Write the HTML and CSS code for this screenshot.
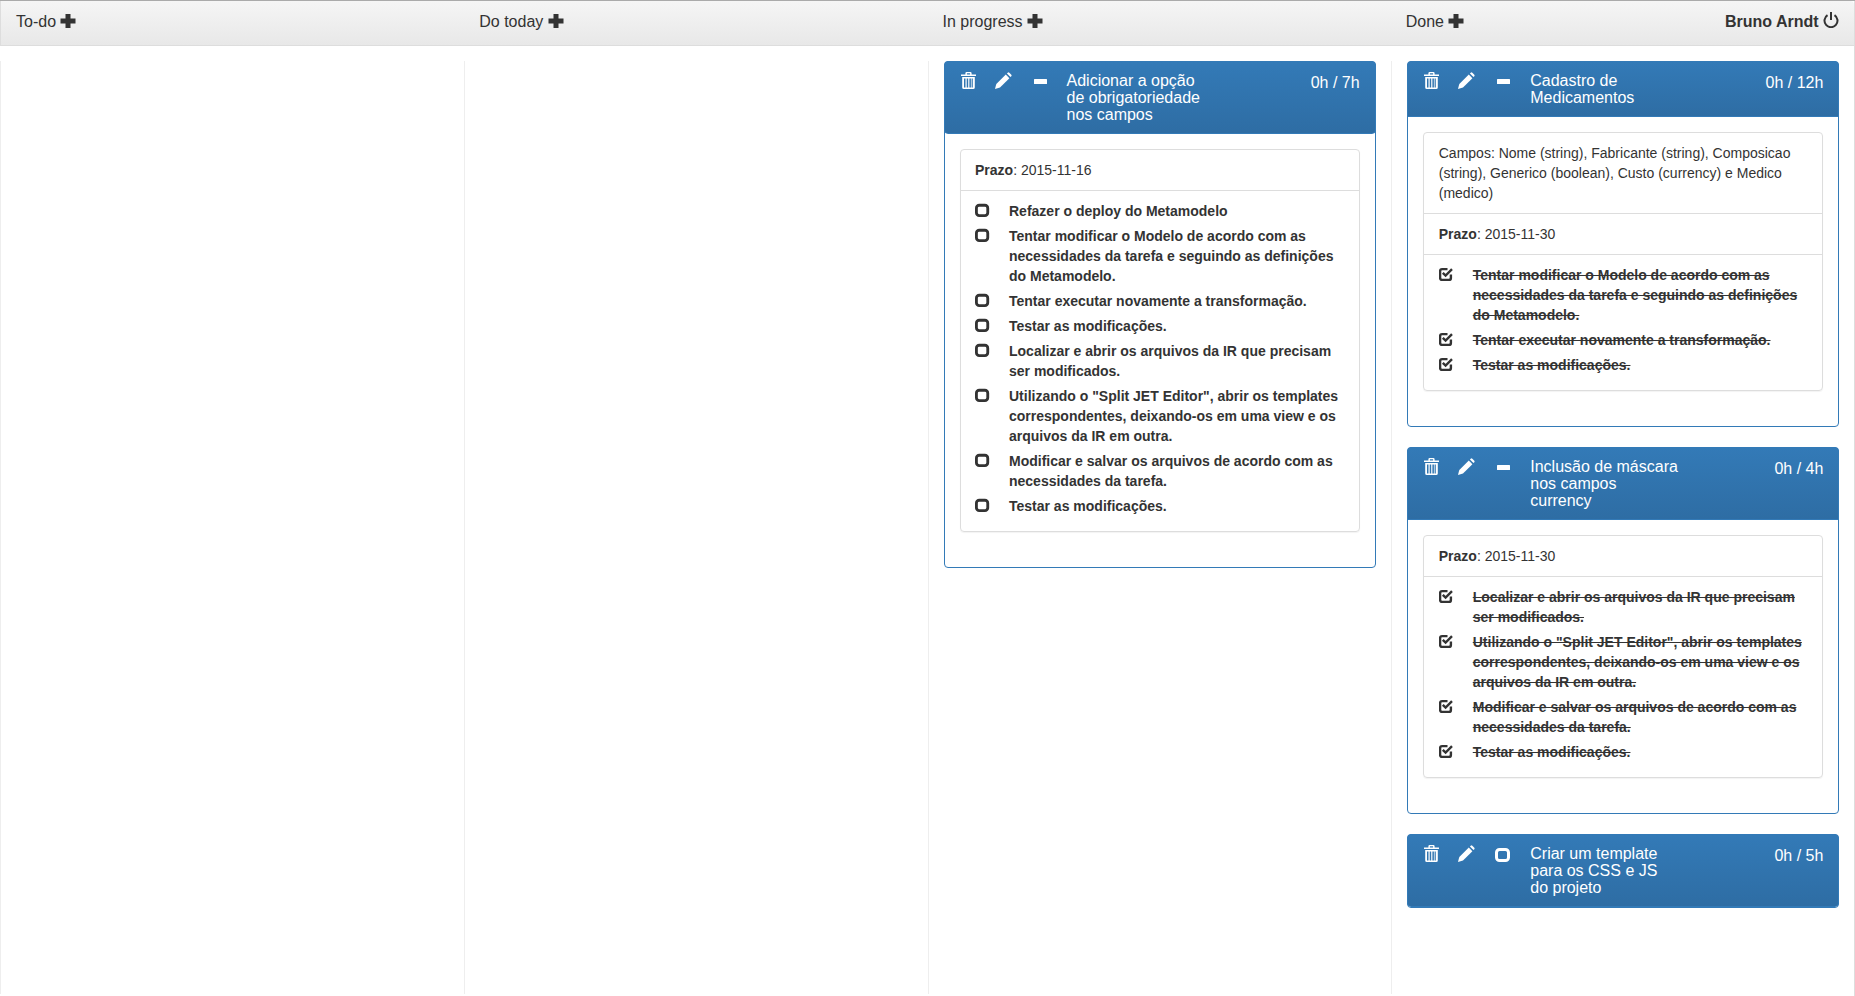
FILE: index.html
```html
<!DOCTYPE html>
<html lang="en">

<head>
    <meta charset="UTF-8">
    <title>Quadro de tarefas</title>
    <link rel="stylesheet" href="styles.css">
</head>

<body>
    <svg class="sprites" xmlns="http://www.w3.org/2000/svg">
        <symbol id="i-trash" viewBox="0 0 18 18">
            <path fill-rule="evenodd" d="M1 2.4h4.4V1.2Q5.4 0 6.6 0h3.800q1.200 0 1.200 1.200v1.200H16V4H1zM6.900 2.400h3.200V1.300H6.900z" />
            <path fill-rule="evenodd" d="M2.200 5h12.600v10.400q0 1.600-1.600 1.600H3.800q-1.600 0-1.600-1.600zM4 6.400v9h1.500v-9zm2.700 0v9h1.500v-9zm2.700 0v9h1.500v-9zm2.200 0v9h1.200v-9z" />
        </symbol>
        <symbol id="i-pencil" viewBox="0 0 18 18">
            <path d="M1 17l1.300-5L11.800 2.600l3.600 3.600L6 15.600z" />
            <path d="M12.900 1.500l.8-.8q.8-.7 1.600 0l2 2q.7.8 0 1.600l-.8.8z" />
        </symbol>
        <symbol id="i-minus" viewBox="0 0 18 18">
            <rect x="2" y="7" width="13" height="5" rx="0.5" />
        </symbol>
        <symbol id="i-box" viewBox="0 0 18 18">
            <rect x="1.500" y="4.500" width="12" height="11" rx="3" fill="none" stroke="currentColor" stroke-width="3" />
        </symbol>
        <symbol id="i-check" viewBox="0 0 16 16">
            <path fill="none" stroke="currentColor" stroke-width="2.400" d="M11.900 8.500v3.400q0 2-2 2H3.100q-2 0-2-2V5.100q0-2 2-2H8.500" />
            <path fill="none" stroke="currentColor" stroke-width="2.400" d="M3.800 6.800l2.800 2.800 6.400-6.400" />
        </symbol>
        <symbol id="i-plus" viewBox="0 0 16 16">
            <path d="M5.500 1h5v4.500H15.500v5h-5V15h-5v-4.500H.5v-5h5z" />
        </symbol>
        <symbol id="i-power" viewBox="0 0 16 16">
            <path fill="none" stroke="currentColor" stroke-width="2" d="M4.500 3.200a6.500 6.500 0 1 0 7 0" />
            <rect x="7" y="0" width="2" height="8" />
        </symbol>
    </svg>

    <header class="topbar">
        <div class="topbar-cell">To-do <svg class="plus"><use href="#i-plus" /></svg></div>
        <div class="topbar-cell">Do today <svg class="plus"><use href="#i-plus" /></svg></div>
        <div class="topbar-cell">In progress <svg class="plus"><use href="#i-plus" /></svg></div>
        <div class="topbar-cell topbar-last">
            <span>Done <svg class="plus"><use href="#i-plus" /></svg></span>
            <span class="user">Bruno Arndt <svg class="power"><use href="#i-power" /></svg></span>
        </div>
    </header>

    <main class="board">
        <section class="column"></section>
        <section class="column"></section>

        <section class="column">
            <article class="task">
                <div class="task-head">
                    <div class="task-icons">
                        <svg><use href="#i-trash" /></svg>
                        <svg><use href="#i-pencil" /></svg>
                        <svg><use href="#i-minus" /></svg>
                    </div>
                    <h3 class="task-title">Adicionar a opção<br>de obrigatoriedade<br>nos campos</h3>
                    <div class="task-hours">0h / 7h</div>
                </div>
                <div class="task-body">
                    <div class="card">
                        <div class="card-row"><b>Prazo</b>: 2015-11-16</div>
                        <ul class="steps">
                            <li><svg class="mark"><use href="#i-box" /></svg>Refazer o deploy do Metamodelo</li>
                            <li><svg class="mark"><use href="#i-box" /></svg>Tentar modificar o Modelo de acordo com as necessidades da tarefa e seguindo as definições do Metamodelo.</li>
                            <li><svg class="mark"><use href="#i-box" /></svg>Tentar executar novamente a transformação.</li>
                            <li><svg class="mark"><use href="#i-box" /></svg>Testar as modificações.</li>
                            <li><svg class="mark"><use href="#i-box" /></svg>Localizar e abrir os arquivos da IR que precisam ser modificados.</li>
                            <li><svg class="mark"><use href="#i-box" /></svg>Utilizando o "Split JET Editor", abrir os templates correspondentes, deixando-os em uma view e os arquivos da IR em outra.</li>
                            <li><svg class="mark"><use href="#i-box" /></svg>Modificar e salvar os arquivos de acordo com as necessidades da tarefa.</li>
                            <li><svg class="mark"><use href="#i-box" /></svg>Testar as modificações.</li>
                        </ul>
                    </div>
                </div>
            </article>
        </section>

        <section class="column">
            <article class="task">
                <div class="task-head">
                    <div class="task-icons">
                        <svg><use href="#i-trash" /></svg>
                        <svg><use href="#i-pencil" /></svg>
                        <svg><use href="#i-minus" /></svg>
                    </div>
                    <h3 class="task-title">Cadastro de<br>Medicamentos</h3>
                    <div class="task-hours">0h / 12h</div>
                </div>
                <div class="task-body">
                    <div class="card">
                        <div class="card-row">Campos: Nome (string), Fabricante (string), Composicao (string), Generico (boolean), Custo (currency) e Medico (medico)</div>
                        <div class="card-row"><b>Prazo</b>: 2015-11-30</div>
                        <ul class="steps done">
                            <li><svg class="mark"><use href="#i-check" /></svg>Tentar modificar o Modelo de acordo com as necessidades da tarefa e seguindo as definições do Metamodelo.</li>
                            <li><svg class="mark"><use href="#i-check" /></svg>Tentar executar novamente a transformação.</li>
                            <li><svg class="mark"><use href="#i-check" /></svg>Testar as modificações.</li>
                        </ul>
                    </div>
                </div>
            </article>

            <article class="task">
                <div class="task-head">
                    <div class="task-icons">
                        <svg><use href="#i-trash" /></svg>
                        <svg><use href="#i-pencil" /></svg>
                        <svg><use href="#i-minus" /></svg>
                    </div>
                    <h3 class="task-title">Inclusão de máscara<br>nos campos<br>currency</h3>
                    <div class="task-hours">0h / 4h</div>
                </div>
                <div class="task-body">
                    <div class="card">
                        <div class="card-row"><b>Prazo</b>: 2015-11-30</div>
                        <ul class="steps done">
                            <li><svg class="mark"><use href="#i-check" /></svg>Localizar e abrir os arquivos da IR que precisam ser modificados.</li>
                            <li><svg class="mark"><use href="#i-check" /></svg>Utilizando o "Split JET Editor", abrir os templates correspondentes, deixando-os em uma view e os arquivos da IR em outra.</li>
                            <li><svg class="mark"><use href="#i-check" /></svg>Modificar e salvar os arquivos de acordo com as necessidades da tarefa.</li>
                            <li><svg class="mark"><use href="#i-check" /></svg>Testar as modificações.</li>
                        </ul>
                    </div>
                </div>
            </article>

            <article class="task">
                <div class="task-head">
                    <div class="task-icons">
                        <svg><use href="#i-trash" /></svg>
                        <svg><use href="#i-pencil" /></svg>
                        <svg><use href="#i-box" /></svg>
                    </div>
                    <h3 class="task-title">Criar um template<br>para os CSS e JS<br>do projeto</h3>
                    <div class="task-hours">0h / 5h</div>
                </div>
            </article>
        </section>
    </main>
</body>

</html>
```

FILE: styles.css
```css
* {
    box-sizing: border-box;
}

body {
    margin: 0;
    min-height: 100vh;
    border-top: 1px solid #aaa;
    background-color: white;
    box-shadow: inset -1px 0 0 #ddd;
    color: #333;
    font-family: "Liberation Sans", Arial, sans-serif;
    font-size: 14px;
    line-height: 20px;
}

.sprites {
    display: none;
}

.topbar {
    display: grid;
    grid-template-columns: repeat(4, 1fr);
    height: 45px;
    margin-right: 1px;
    border-bottom: 1px solid #ddd;
    border-left: 1px solid #ddd;
    border-top-right-radius: 4px;
    background-image: linear-gradient(to bottom, #f5f5f5, #e8e8e8);
    font-size: 16px;
}

.topbar-cell {
    padding: 11px 15px 0;
    white-space: nowrap;
}

.topbar-last {
    display: flex;
    justify-content: space-between;
}

.user {
    font-weight: bold;
}

.plus {
    width: 16px;
    height: 16px;
    fill: currentColor;
    vertical-align: -2px;
}

.power {
    width: 16px;
    height: 16px;
    fill: currentColor;
    vertical-align: -1px;
}

.board {
    display: grid;
    grid-template-columns: repeat(4, 1fr);
    margin-top: 15px;
}

.column {
    min-height: 933px;
    padding: 0 15.6px 0 15px;
    border-left: 1px solid #eee;
}

.task {
    margin-bottom: 20px;
    border: 1px solid #337ab7;
    border-radius: 4px;
}

.task-head {
    display: flex;
    margin: -1px -1px 0;
    padding: 10px 15px;
    border: 1px solid #337ab7;
    border-radius: 4px 4px 0 0;
    background-image: linear-gradient(to bottom, #337ab7, #2e6da4);
    color: white;
    font-size: 16px;
}

.task:last-child .task-head {
    border-radius: 4px;
}

.task-icons {
    display: grid;
    grid-template-columns: 34px 38px 35px;
    flex: none;
    align-items: start;
}

.task-icons svg {
    width: 18px;
    height: 18px;
    fill: white;
    color: white;
}

.task-title {
    flex: 1;
    margin: 0;
    font-size: 16px;
    font-weight: normal;
    line-height: 17px;
}

.task-hours {
    flex: none;
    margin-top: 1px;
}

.task-body {
    padding: 15px;
}

.card {
    margin-bottom: 20px;
    border: 1px solid #ddd;
    border-radius: 4px;
    box-shadow: 0 1px 1px rgba(0, 0, 0, 0.05);
}

.card-row {
    padding: 10px 15px 10px 14.5px;
    border-bottom: 1px solid #ddd;
}

.steps {
    margin: 0;
    padding: 10px 15px 10px 14.5px;
    list-style: none;
    font-weight: bold;
}

.steps li {
    position: relative;
    margin-bottom: 5px;
    padding-left: 34px;
}

.steps.done li {
    text-decoration: line-through;
}

.mark {
    position: absolute;
    left: 0;
    top: 0;
    width: 17px;
    height: 17px;
    fill: currentColor;
}

.done .mark {
    top: 1px;
    width: 16px;
    height: 16px;
}
```
